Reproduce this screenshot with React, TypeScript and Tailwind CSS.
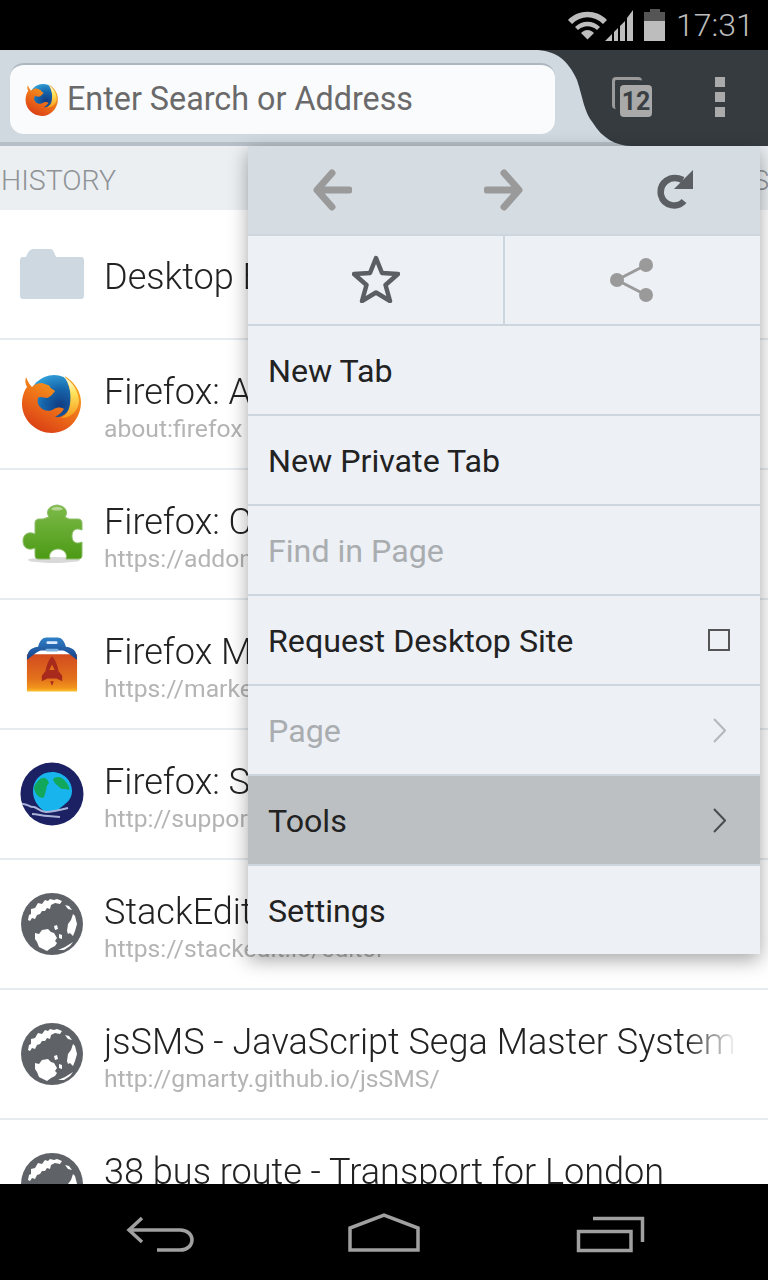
import type { ReactNode } from "react";

const FirefoxIcon = ({ className, id }: { className: string; id: string }) => (
    <svg viewBox="0 0 62 62" className={className}>
        <defs>
            <radialGradient id={`${id}Blue`} cx="0.62" cy="0.62" r="0.7">
                <stop offset="0" stopColor="#123a80" />
                <stop offset="0.5" stopColor="#1666ac" />
                <stop offset="1" stopColor="#35a7dd" />
            </radialGradient>
            <linearGradient id={`${id}Fox`} x1="0.75" y1="0.1" x2="0.25" y2="1">
                <stop offset="0" stopColor="#f7a11e" />
                <stop offset="0.45" stopColor="#ee7219" />
                <stop offset="1" stopColor="#d93c15" />
            </linearGradient>
            <linearGradient id={`${id}Flame`} x1="0" y1="0" x2="0" y2="1">
                <stop offset="0" stopColor="#ffffff" />
                <stop offset="0.4" stopColor="#ffe45c" />
                <stop offset="1" stopColor="#f59a1c" />
            </linearGradient>
        </defs>
        <circle cx="33" cy="27" r="25" fill={`url(#${id}Blue)`} />
        <path d="M5 4 C7 9 9 12 11 14 C14 11 17 10 21 10 C24 11 27 12 29 13 C28 15 32 16 34 18 C31 22 29 24 26 25 C23 25 19 23 17 25 C16 29 17 32 19 34 C22 38 29 39 33 36 C36 34 40 34 43 36 C41 39 38 42 34 44 C40 45 46 41 50 34 C52 28 50 18 44 3 C53 9 60 18 60 29 C60 46 47 60 31 60 C15 60 1 47 1 31 C1 24 3 18 6 14 C4 11 4 7 5 4 Z" fill={`url(#${id}Fox)`} />
        <path d="M42 3 C50 10 50 24 49 31 C48 38 45 42 40 45 C50 45 57 38 58 29 C58 19 52 9 42 3 Z" fill={`url(#${id}Flame)`} />
    </svg>
);

const PuzzleIcon = () => (
    <svg viewBox="0 0 62 62" className="w-[62px] h-[62px]">
        <defs>
            <linearGradient id="pzGreen" x1="0" y1="0" x2="0" y2="1">
                <stop offset="0" stopColor="#7dba4a" />
                <stop offset="1" stopColor="#4c9a14" />
            </linearGradient>
        </defs>
        <ellipse cx="33" cy="57" rx="26" ry="3" fill="#000" opacity="0.15" />
        <path d="M22 16 L28 14 C25 10 26 3 36 2 C46 3 47 10 44 14 L48 16 L57 16 C60 16 61 18 61 20 L61 27 C54 24 51 28 51 33 C51 38 54 42 61 39 L61 52 C61 55 60 56 57 56 L45 56 C47 50 42 46 37 46 C32 46 27 50 29 56 L18 56 C15 56 14 55 14 52 L14 45 C8 48 2 45 2 38 C2 31 8 28 14 31 L14 20 C14 17 16 16 18 16 Z" fill="url(#pzGreen)" stroke="#8dbd68" strokeWidth="1" />
        <path d="M30 6 C33 3 39 3 42 6 C39 8 33 8 30 6 Z" fill="#c5dfa8" opacity="0.8" />
    </svg>
);

const MarketIcon = () => (
    <svg viewBox="0 0 56 58" className="w-[52px] h-[55px]">
        <defs>
            <linearGradient id="mkBag" x1="0" y1="0" x2="0" y2="1">
                <stop offset="0" stopColor="#d24b1f" />
                <stop offset="0.65" stopColor="#e2701c" />
                <stop offset="0.9" stopColor="#f2941c" />
                <stop offset="1" stopColor="#fbc02d" />
            </linearGradient>
            <linearGradient id="mkBlue" x1="0" y1="0" x2="0" y2="1">
                <stop offset="0" stopColor="#2f80c8" />
                <stop offset="1" stopColor="#173f86" />
            </linearGradient>
        </defs>
        <path d="M1 18 L55 18 L55 58 L1 58 Z" fill="url(#mkBag)" />
        <path d="M1 24 C1 16 4 11 13 10 C15 3 18 0 22 0 L34 0 C38 0 41 3 43 10 C52 11 55 16 55 24 C49 20 46 16 40 14 L16 14 C10 16 7 20 1 24 Z" fill="url(#mkBlue)" />
        <rect x="22" y="4" width="12" height="3" rx="1.5" fill="#dbeafe" />
        <rect x="21" y="12" width="14" height="3" rx="1.5" fill="#7fb2e0" />
        <path d="M28 20 C32 24 34 30 35 36 L39 41 L39 47 L33 44 L23 44 L17 47 L17 41 L21 36 C22 30 24 24 28 20 Z" fill="#a82a1c" />
        <path d="M28 29 L31 35 L25 35 Z" fill="#e2701c" />
        <path d="M26 47 L28 52 L30 47 Z" fill="#a82a1c" />
    </svg>
);

const SupportIcon = () => (
    <svg viewBox="0 0 64 64" className="w-[64px] h-[64px]">
        <circle cx="32" cy="32" r="31.5" fill="#1c2163" />
        <path d="M32 10 C44 10 52 19 52 29 C52 37 47 41 40 46 L38 49 L24 49 C17 44 13 37 13 29 C13 19 20 10 32 10 Z" fill="#17b4ee" />
        <path d="M14 26 C16 18 23 15 25 16 C29 18 30 23 27 23 C26 28 25 35 23 36 C19 36 15 32 14 26 Z" fill="#12a85c" />
        <path d="M33 17 C36 14 42 14 46 20 C49 24 50 27 49 28 C45 26 43 28 40 26 C39 24 34 22 33 17 Z" fill="#12a85c" />
        <path d="M2 42 C7 41 10 46 14 45 C18 46 20 50 26 50 C32 50 40 48 48 46" fill="none" stroke="#aab3d8" strokeWidth="2" />
        <path d="M12 52 C18 52 22 54 28 54 L40 55" fill="none" stroke="#aab3d8" strokeWidth="2" />
    </svg>
);

const GlobeIcon = () => (
    <svg viewBox="0 0 62 62" className="w-[62px] h-[62px] shrink-0">
        <circle cx="31" cy="31" r="31" fill="#5f6368" />
        <path d="M7 27 L8 22 L10 21 L10 16 L14 15 L17 10 L21 11 L24 7 L27 8 L29 6 L33 7 L36 6 L41 8 L39 11 L34 10 L30 12 L29 16 L26 15 L24 18 L21 18 L19 21 L16 22 L14 26 L11 25 L9 28 Z" fill="#fff" />
        <path d="M14 40 L18 41 L21 37 L27 36 L30 39 L33 40 L36 45 L34 48 L36 50 L34 53 L30 55 L26 58 L22 56 L18 54 L16 49 L14 46 Z" fill="#fff" />
        <path d="M46 38 L47 31 L50 27 L52 21 L54 23 L56 31 L54 38 L52 43 L49 40 L47 41 Z" fill="#fff" />
        <path d="M37 57 L44 54 L52 49 L49 53 L43 57 Z" fill="#fff" />
        <path d="M44 12 L48 13 L51 17 L47 16 Z" fill="#fff" />
        <path d="M33 33 L36 32 L37 36 L34 37 Z" fill="#fff" />
        <path d="M38 41 L41 42 L41 46 L38 45 Z" fill="#fff" />
    </svg>
);

const FolderIcon = () => (
    <svg viewBox="0 0 64 50" className="w-[64px] h-[50px]">
        <path d="M3 50 C1 50 0 49 0 47 L0 11 C0 9 1 8 3 8 L6 8 C8 3 10 0 14 0 L30 0 C33 0 34 3 36 8 L61 8 C63 8 64 9 64 11 L64 47 C64 49 63 50 61 50 Z" fill="#cdd8e1" />
    </svg>
);

const WifiIcon = () => (
    <svg viewBox="0 0 40 30" className="w-[40px] h-[30px]">
        <path d="M0 10 C10 -1 29 -1 39 10 L35 14 C26 5 13 5 4 14 Z" fill="#bdbdbd" />
        <path d="M7 17 C14 10 25 10 32 17 L29 20 C23 15 16 15 10 20 Z" fill="#bdbdbd" />
        <path d="M13 23 C17 19 22 19 26 23 L19.5 29.5 Z" fill="#bdbdbd" />
    </svg>
);

const SignalIcon = () => (
    <svg viewBox="0 0 28 32" className="w-[28px] h-[32px] -ml-[3px]">
        <path d="M0 32 L7 25 L7 32 Z M9 32 L9 23 L13 19 L13 32 Z M15 32 L15 17 L20 12 L20 32 Z M22 32 L22 9 L28 1 L28 32 Z" fill="#bdbdbd" />
    </svg>
);

const BatteryIcon = () => (
    <div className="ml-[11px] flex flex-col items-center w-[21px] h-[32px]">
        <div className="w-[10px] h-[3px] bg-[#555555]" />
        <div className="w-full h-[9px] bg-[#555555]" />
        <div className="w-full flex-1 bg-[#bdbdbd]" />
    </div>
);

const TabsIcon = () => (
    <div className="relative w-[40px] h-[40px] -ml-[20px] -mt-[2px]">
        <div className="absolute left-0 top-0 w-[30px] h-[32px] rounded-[4px] border-l-[3px] border-t-[3px] border-[#9a9a9a]" />
        <div className="absolute left-[8px] top-[8px] w-[32px] h-[32px] rounded-[4px] bg-[#a9a9a9] flex items-center justify-center text-[25px] font-bold text-[#3a3f44] leading-none">12</div>
    </div>
);

const NavIcons = () => (
    <div className="flex-1 flex items-center pl-[65px]">
        <svg viewBox="0 0 39 42" className="w-[39px] h-[42px]">
            <path d="M19 4 L4 21 L19 38 M6 21 L36 21" fill="none" stroke="#9a9a9a" strokeWidth="7" strokeLinejoin="round" strokeLinecap="round" />
        </svg>
        <svg viewBox="0 0 39 42" className="ml-[132px] w-[39px] h-[42px]">
            <path d="M20 4 L35 21 L20 38 M3 21 L33 21" fill="none" stroke="#9a9a9a" strokeWidth="7" strokeLinejoin="round" strokeLinecap="round" />
        </svg>
        <svg viewBox="0 0 37 40" className="ml-[133px] w-[37px] h-[40px]">
            <path d="M28 31 C22 38 8 37 5 25 C3 13 14 4 27 10" fill="none" stroke="#5b5f64" strokeWidth="6.5" />
            <path d="M37 0 L37 19 L18 19 Z" fill="#5b5f64" />
        </svg>
    </div>
);

const Chevron = ({ className }: { className: string }) => (
    <svg viewBox="0 0 13 25" className={`w-[13px] h-[25px] mr-[4px] ${className}`}>
        <path d="M1 1 L12 12.5 L1 24" fill="none" stroke="currentColor" strokeWidth="2" />
    </svg>
);

interface HistoryRow {
    title: string;
    url?: string;
    icon: ReactNode;
}

const rows: HistoryRow[] = [
    { title: "Desktop Bookmarks", icon: <FolderIcon /> },
    { title: "Firefox: About your browser", url: "about:firefox", icon: <FirefoxIcon id="ffRow" className="w-[62px] h-[62px]" /> },
    { title: "Firefox: Customize with add-ons", url: "https://addons.mozilla.org/en-US/android/", icon: <PuzzleIcon /> },
    { title: "Firefox Marketplace", url: "https://marketplace.firefox.com/", icon: <MarketIcon /> },
    { title: "Firefox: Support", url: "http://support.mozilla.org/en-US/mobile", icon: <SupportIcon /> },
    { title: "StackEdit", url: "https://stackedit.io/editor", icon: <GlobeIcon /> },
    { title: "jsSMS - JavaScript Sega Master System Emulator", url: "http://gmarty.github.io/jsSMS/", icon: <GlobeIcon /> },
    { title: "38 bus route - Transport for London", url: "https://tfl.gov.uk/bus/route/38/", icon: <GlobeIcon /> },
];

const MenuRow = ({ label, muted, active, last, right }: { label: string; muted?: boolean; active?: boolean; last?: boolean; right?: ReactNode }) => (
    <div className={`flex items-center justify-between pl-[20px] pr-[30px] ${last ? "h-[88px]" : "h-[90px] border-b-2 border-[#cdd6de]"} ${active ? "bg-[#bcc0c3]" : ""}`}>
        <span className={`pt-[2px] text-[32.2px] leading-none ${muted ? "text-[#a9adb0]" : "text-[#222222]"}`}>{label}</span>
        {right}
    </div>
);

const App = () => {
    return (
        <div className="relative w-[768px] h-[1280px] overflow-hidden bg-white font-['Roboto',sans-serif]">
            {/* status bar */}
            <div className="h-[50px] bg-black flex items-center pl-[568px]">
                <WifiIcon />
                <SignalIcon />
                <BatteryIcon />
                <span className="ml-[11px] text-[32px] font-light leading-none text-[#bdbdbd]">17:31</span>
            </div>

            {/* toolbar */}
            <div className="relative h-[96px] flex bg-[#d0d9e0]">
                <div className="flex-1 min-w-0 flex flex-col border-b-4 border-[#b6bfc7]">
                    <div className="ml-[10px] mt-[13px] w-[545px] h-[71px] rounded-[14px] bg-[#fafbfd] border-t-2 border-[#aeb7bf] flex items-center pl-[15px]">
                        <FirefoxIcon id="ffBar" className="w-[34px] h-[34px]" />
                        <span className="ml-[8px] text-[32.3px] text-[#6a6a6a] leading-none">Enter Search or Address</span>
                    </div>
                </div>
                <svg viewBox="0 0 98 96" className="absolute left-[534px] top-0 w-[98px] h-[96px]">
                    <path d="M0 0 C22 0 34 10 43 30 C49 48 50 62 59 73 C68 88 82 96 98 96 L98 0 Z" fill="#363b40" />
                </svg>
                <div className="w-[136px] bg-[#363b40] flex items-center relative">
                    <TabsIcon />
                    <div className="ml-[63px] -mt-[2px] flex flex-col gap-[5px]">
                        <div className="w-[10px] h-[10px] bg-[#aaaaaa]" />
                        <div className="w-[10px] h-[10px] bg-[#aaaaaa]" />
                        <div className="w-[10px] h-[10px] bg-[#aaaaaa]" />
                    </div>
                </div>
            </div>

            {/* history panel */}
            <div className="h-[64px] bg-[#ebeff2] flex items-center pl-[1px] pt-[6px] overflow-hidden whitespace-nowrap">
                <span className="text-[28.5px] font-light text-[#8f9396]">HISTORY</span>
                <span className="ml-[636px] text-[28.5px] font-light text-[#8f9396]">STARRED</span>
            </div>
            <div className="h-[974px] overflow-hidden">
                {rows.map((row) => (
                    <div key={row.title} className="h-[130px] border-b-2 border-[#e6ebef] flex items-center pl-[20px] pr-[31px]">
                        <div className="w-[64px] shrink-0 flex justify-center">{row.icon}</div>
                        <div className={`ml-[20px] flex-1 min-w-0 whitespace-nowrap overflow-hidden [mask-image:linear-gradient(to_right,black_92%,transparent)] ${row.url ? "pt-[8px]" : "pt-[6px]"}`}>
                            <div className="text-[36.1px] leading-[40px] font-light text-[#222222]">{row.title}</div>
                            {row.url && <div className="mt-[2px] text-[24.7px] leading-[30px] text-[#b4b4b4]">{row.url}</div>}
                        </div>
                    </div>
                ))}
            </div>

            {/* nav bar */}
            <div className="absolute left-0 bottom-0 w-full h-[96px] bg-black">
                <svg viewBox="0 0 768 96" className="w-[768px] h-[96px]">
                    <g fill="none" stroke="#a0a0a0" strokeWidth="3.5">
                        <path d="M142 34 L129 46 L142 58 M130 46 L180 46 C196 46 196 66 180 66 L157 66" />
                        <path d="M350 66 L350 44 L384 31 L418 44 L418 66 Z" />
                        <path d="M578.5 47.5 L631 47.5 L631 66.5 L578.5 66.5 Z M593 34.5 L642.5 34.5 L642.5 58" />
                    </g>
                </svg>
            </div>

            {/* overflow menu */}
            <div className="absolute left-[248px] top-[146px] w-[512px] bg-[#edf0f5] shadow-[0_6px_18px_rgba(0,0,0,0.35)]">
                <div className="h-[90px] bg-[#d5dce2] border-b-2 border-[#cdd6de] flex">
                    <NavIcons />
                </div>
                <div className="h-[90px] border-b-2 border-[#cdd6de] flex">
                    <div className="w-[257px] border-r-2 border-[#cdd6de] flex items-center justify-center">
                        <svg viewBox="0 0 48 48" className="w-[48px] h-[48px] -mt-[2px]">
                            <path d="M24 3 L30 18 L46 19 L33.5 30 L38 46 L24 37.5 L10 46 L14.5 30 L2 19 L18 18 Z" fill="none" stroke="#5b5f64" strokeWidth="4.5" strokeLinejoin="round" />
                        </svg>
                    </div>
                    <div className="flex-1 flex items-center justify-center">
                        <svg viewBox="0 0 44 44" className="w-[44px] h-[44px] -ml-[2px]">
                            <path d="M36 7 L7 22 L36 37" fill="none" stroke="#9a9a9a" strokeWidth="3" />
                            <circle cx="36" cy="7" r="7" fill="#9a9a9a" />
                            <circle cx="7" cy="22" r="7" fill="#9a9a9a" />
                            <circle cx="36" cy="37" r="7" fill="#9a9a9a" />
                        </svg>
                    </div>
                </div>
                <MenuRow label="New Tab" />
                <MenuRow label="New Private Tab" />
                <MenuRow label="Find in Page" muted />
                <MenuRow label="Request Desktop Site" right={<div className="w-[22px] h-[22px] border-2 border-[#555555]" />} />
                <MenuRow label="Page" muted right={<Chevron className="text-[#b4b8bb]" />} />
                <MenuRow label="Tools" active right={<Chevron className="text-[#4a4d50]" />} />
                <MenuRow label="Settings" last />
            </div>
        </div>
    );
};

export default App;
